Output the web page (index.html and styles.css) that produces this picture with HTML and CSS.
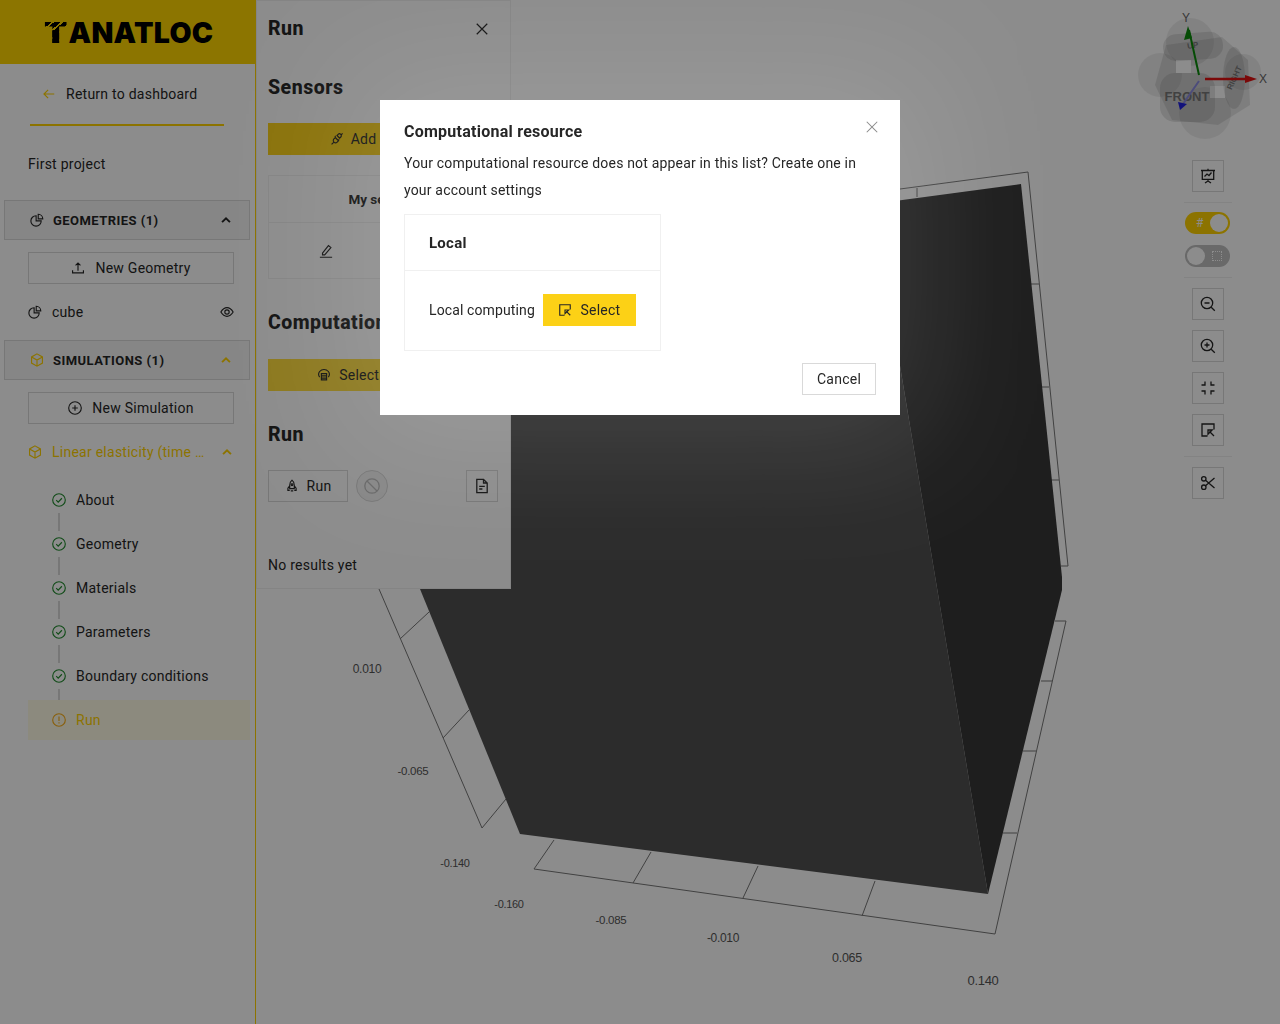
FILE: index.html
```html
<!DOCTYPE html>
<html lang="en">
<head>
    <meta charset="UTF-8">
    <meta name="viewport" content="width=device-width, initial-scale=1.0">
    <title>Tanatloc</title>
    <link rel="stylesheet" href="styles.css">
</head>
<body>
    <svg class="icon-defs" aria-hidden="true">
        <symbol id="i-back" viewBox="0 0 16 16"><path d="M14 8H2.500M7 3.200 2.200 8 7 12.800"/></symbol>
        <symbol id="i-pie" viewBox="0 0 16 16"><path d="M7 3.200A5.900 5.900 0 1 0 12.800 9H7zM9.400 1.400a5.400 5.400 0 0 1 5.200 5.300H9.400z"/></symbol>
        <symbol id="i-up" viewBox="0 0 16 16"><path d="M3.500 10.500 8 6l4.500 4.500"/></symbol>
        <symbol id="i-upload" viewBox="0 0 16 16"><path d="M8 11V2.500M5.200 5 8 2.300 10.800 5M1.800 10.500v3h12.400v-3"/></symbol>
        <symbol id="i-eye" viewBox="0 0 16 16"><path d="M1 8c2-3.300 4.400-5 7-5s5 1.700 7 5c-2 3.300-4.400 5-7 5s-5-1.700-7-5z"/><circle cx="8" cy="8" r="2.500"/></symbol>
        <symbol id="i-box" viewBox="0 0 16 16"><path d="M8 1l6.200 3.500v7L8 15l-6.200-3.500v-7zM1.800 4.500 8 8l6.200-3.500M8 8v7"/></symbol>
        <symbol id="i-plus-circle" viewBox="0 0 16 16"><circle cx="8" cy="8" r="7.200"/><path d="M8 4.800v6.400M4.800 8h6.400"/></symbol>
        <symbol id="i-check" viewBox="0 0 16 16"><circle cx="8" cy="8" r="7.200"/><path d="M4.800 8.200l2.300 2.300L11.300 6"/></symbol>
        <symbol id="i-warn" viewBox="0 0 16 16"><circle cx="8" cy="8" r="7.200"/><path d="M8 4V9M8 10.600v1.400"/></symbol>
        <symbol id="i-edit" viewBox="0 0 16 16"><path d="M4 10.500 10.800 1.800l2.800 2.200L6.500 12.500H4zM1 15.200h14"/></symbol>
        <symbol id="i-delete" viewBox="0 0 16 16"><path d="M2 4h12M6 4V2h4v2M3.500 4l.7 10h7.600l.7-10"/></symbol>
        <symbol id="i-plug" viewBox="0 0 16 16"><path d="M6 6.300l3.700 3.700-1.500 1.500a2.600 2.600 0 0 1-3.700-3.700zM4.500 11.500 1.800 14.200M10 6l-2-2 1.300-1.300a2.100 2.100 0 0 1 3 3L11 7zM12.300 3.700 14.400 1.600M5.500 5.500l1-1M9.500 9.500l1-1"/></symbol>
        <symbol id="i-cloud" viewBox="0 0 16 16"><path d="M3 10.500a5.500 5.500 0 0 1 0-6.500 6.500 6.500 0 0 1 10 0 5.500 5.500 0 0 1 0 6.500M5 6.500h6v7H5zM5 9h6M5 11.500h6"/></symbol>
        <symbol id="i-rocket" viewBox="0 0 16 16"><path d="M8 1.300c2 1.500 2.600 3.500 2.600 5.700v4H5.400V7c0-2.200.6-4.200 2.600-5.700zM5.400 7.800 3.300 10.500v2.500h2.100M10.600 7.800l2.100 2.700V13h-2.100M6.600 13.500h2.800"/><circle cx="8" cy="6.500" r="1"/></symbol>
        <symbol id="i-stop" viewBox="0 0 16 16"><circle cx="8" cy="8" r="7.200"/><path d="M3 3l10 10"/></symbol>
        <symbol id="i-file" viewBox="0 0 16 16"><path d="M2.800 1.300h6.700l3.700 3.700v9.700H2.800zM9.500 1.300V5h3.700M5.200 8.300h5.600M5.200 11h3.200"/></symbol>
        <symbol id="i-select" viewBox="0 0 16 16"><path d="M14 7.500V2H2v12h5.500M9.500 9.500l4.500 4.500"/><path class="solid" d="M8 8h4.200L8 12.200z"/></symbol>
        <symbol id="i-screen" viewBox="0 0 16 16"><path d="M1 2.500h14M2.300 2.500v8.800h11.400V2.500M4.500 8.500 7 6l2 1.500 2.500-3M8 .8v1.700M8 11.300v1.700M5 15l3-2 3 2"/></symbol>
        <symbol id="i-zoom-out" viewBox="0 0 16 16"><circle cx="7" cy="7" r="5.700"/><path d="M11.200 11.200 14.800 14.800M4.500 7h5"/></symbol>
        <symbol id="i-zoom-in" viewBox="0 0 16 16"><circle cx="7" cy="7" r="5.700"/><path d="M11.200 11.200 14.800 14.800M4.500 7h5M7 4.500v5"/></symbol>
        <symbol id="i-compress" viewBox="0 0 16 16"><path d="M5 1.500V5H1.500M11 1.500V5h3.500M5 14.500V11H1.500M11 14.500V11h3.500"/></symbol>
        <symbol id="i-scissor" viewBox="0 0 16 16"><circle cx="3.800" cy="3.800" r="2.200"/><circle cx="3.800" cy="12.200" r="2.200"/><path d="M5.500 5.200 14.500 13M5.500 10.800 14.500 3"/></symbol>
        <symbol id="i-close" viewBox="0 0 16 16"><path d="M1 1l14 14M15 1 1 15"/></symbol>
    </svg>

    <div class="app">
        <aside class="sidebar">
            <div class="logo"><span class="logo-t">T</span>ANATLOC</div>
            <a class="back"><svg class="ico ico-yellow"><use href="#i-back"/></svg>Return to dashboard</a>
            <div class="project">First project</div>

            <div class="menu-head">
                <svg class="ico"><use href="#i-pie"/></svg>
                <span>GEOMETRIES (1)</span>
                <svg class="ico chevron"><use href="#i-up"/></svg>
            </div>
            <button class="btn side-btn"><svg class="ico"><use href="#i-upload"/></svg>New Geometry</button>
            <div class="geometry-row">
                <svg class="ico"><use href="#i-pie"/></svg>
                <span>cube</span>
                <svg class="ico eye"><use href="#i-eye"/></svg>
            </div>

            <div class="menu-head">
                <svg class="ico ico-yellow"><use href="#i-box"/></svg>
                <span>SIMULATIONS (1)</span>
                <svg class="ico chevron ico-yellow"><use href="#i-up"/></svg>
            </div>
            <button class="btn side-btn"><svg class="ico"><use href="#i-plus-circle"/></svg>New Simulation</button>
            <div class="sim-row">
                <svg class="ico"><use href="#i-box"/></svg>
                <span class="sim-name">Linear elasticity (time dependent)</span>
                <svg class="ico chevron"><use href="#i-up"/></svg>
            </div>

            <ul class="steps">
                <li class="step"><svg class="ico ico-green"><use href="#i-check"/></svg>About</li>
                <li class="step"><svg class="ico ico-green"><use href="#i-check"/></svg>Geometry</li>
                <li class="step"><svg class="ico ico-green"><use href="#i-check"/></svg>Materials</li>
                <li class="step"><svg class="ico ico-green"><use href="#i-check"/></svg>Parameters</li>
                <li class="step"><svg class="ico ico-green"><use href="#i-check"/></svg>Boundary conditions</li>
                <li class="step step-active"><svg class="ico ico-orange"><use href="#i-warn"/></svg>Run</li>
            </ul>
        </aside>

        <main class="workspace">
            <svg class="scene" viewBox="256 0 1024 1024">
                <g class="grid">
                    <path d="M900 189 1028 172 1068 566H1061M917 188V197M1039 284H1031M1049 387H1042M1059 480H1051"/>
                    <path d="M554 840 534 869 995 934 1066 621H1055M651 852 633 883M758 866 743 898M875 881 862 916M1003 833H1017M1023 751H1036M1041 681H1052"/>
                    <path d="M379 589 482 828 506 799M400 639 429 612M443 738 469 710"/>
                </g>
                <polygon class="face-light" points="349,415 520,834 988,894 939,600 900,366 880,250 349,250"/>
                <polygon class="face-dark" points="1021,184 880,203 900,366 939,600 988,894 1062,590 1062,577"/>
                <g class="ticks">
                    <text x="367" y="673" font-size="12">0.010</text>
                    <text x="413" y="775" font-size="11.500">-0.065</text>
                    <text x="455" y="867" font-size="11">-0.140</text>
                    <text x="509" y="908" font-size="11">-0.160</text>
                    <text x="611" y="924" font-size="11.500">-0.085</text>
                    <text x="723" y="942" font-size="12">-0.010</text>
                    <text x="847" y="962" font-size="12.500">0.065</text>
                    <text x="983" y="985" font-size="13">0.140</text>
                </g>
                <g class="cube">
                    <circle cx="1190" cy="42" r="24"/>
                    <circle cx="1160" cy="75" r="22"/>
                    <circle cx="1205" cy="113" r="26"/>
                    <circle cx="1243" cy="72" r="18"/>
                    <path d="M1166 45 1222 37 1248 60 1250 105 1218 125 1172 120 1155 85z"/>
                    <rect class="gap" x="1176" y="60" width="15" height="13"/>
                    <rect class="gap" x="1210" y="86" width="15" height="12"/>
                    <rect class="side" x="1160" y="73" width="55" height="49" rx="15"/>
                    <rect class="side" x="1163" y="33" width="60" height="27" rx="13" transform="rotate(-4 1193 46)"/>
                    <ellipse class="side" cx="1234" cy="78" rx="11" ry="31"/>
                    <text class="cube-label" x="1187" y="101" font-size="13">FRONT</text>
                    <text class="cube-label" x="1193" y="48" font-size="8" transform="rotate(-10 1193 46)">UP</text>
                    <text class="cube-label" x="1235" y="80" font-size="8" transform="rotate(-65 1235 78)">RIGHT</text>
                    <path class="axis-y" d="M1199 75 1189 30"/>
                    <path class="axis-y-head" d="M1188 26 1184 40 1192 38z"/>
                    <path class="axis-x" d="M1205 79H1246"/>
                    <path class="axis-x-head" d="M1257 79 1245 75V83z"/>
                    <path class="axis-z" d="M1199 81 1183 104"/>
                    <path class="axis-z-head" d="M1180 110 1178 102 1187 104z"/>
                    <text class="axis-label" x="1186" y="22">Y</text>
                    <text class="axis-label" x="1263" y="83">X</text>
                </g>
            </svg>

            <section class="panel">
                <div class="panel-head">
                    <h2>Run</h2>
                    <svg class="ico close"><use href="#i-close"/></svg>
                </div>
                <h3>Sensors</h3>
                <button class="btn btn-primary wide add-btn"><svg class="ico"><use href="#i-plug"/></svg>Add sensors</button>
                <div class="sensors">
                    <div class="sensors-title">My sensors</div>
                    <div class="sensors-actions">
                        <svg class="ico"><use href="#i-edit"/></svg>
                        <svg class="ico"><use href="#i-delete"/></svg>
                    </div>
                </div>
                <h3 class="section">Computational resource</h3>
                <button class="btn btn-primary btn-soft wide select-btn"><svg class="ico"><use href="#i-cloud"/></svg>Select computing</button>
                <h3 class="section">Run</h3>
                <div class="run-row">
                    <button class="btn run-btn"><svg class="ico"><use href="#i-rocket"/></svg>Run</button>
                    <button class="round-btn"><svg class="ico"><use href="#i-stop"/></svg></button>
                    <button class="btn square-btn log-btn"><svg class="ico"><use href="#i-file"/></svg></button>
                </div>
                <p class="no-results">No results yet</p>
            </section>

            <div class="toolbar">
                <button class="btn square-btn"><svg class="ico"><use href="#i-screen"/></svg></button>
                <div class="divider divider-tight"></div>
                <div class="switch switch-on"><span class="switch-glyph">#</span><span class="knob"></span></div>
                <div class="switch"><span class="knob"></span><span class="dots"></span></div>
                <div class="divider"></div>
                <button class="btn square-btn"><svg class="ico"><use href="#i-zoom-out"/></svg></button>
                <button class="btn square-btn"><svg class="ico"><use href="#i-zoom-in"/></svg></button>
                <button class="btn square-btn"><svg class="ico"><use href="#i-compress"/></svg></button>
                <button class="btn square-btn"><svg class="ico"><use href="#i-select"/></svg></button>
                <div class="divider"></div>
                <button class="btn square-btn"><svg class="ico"><use href="#i-scissor"/></svg></button>
            </div>
        </main>
    </div>

    <div class="mask">
        <div class="modal">
            <svg class="ico modal-close"><use href="#i-close"/></svg>
            <div class="modal-title">Computational resource</div>
            <p class="modal-text">Your computational resource does not appear in this list? Create one in your account settings</p>
            <div class="card">
                <div class="card-head">Local</div>
                <div class="card-body">
                    <span class="card-name">Local computing</span>
                    <button class="btn btn-primary"><svg class="ico"><use href="#i-select"/></svg>Select</button>
                </div>
            </div>
            <div class="modal-foot">
                <button class="btn cancel-btn">Cancel</button>
            </div>
        </div>
    </div>
</body>
</html>
```

FILE: styles.css
```css
* {
    box-sizing: border-box;
}

html, body {
    margin: 0;
    height: 100%;
    overflow: hidden;
}

body {
    font-family: Roboto, "Noto Sans", sans-serif;
    font-size: 14px;
    letter-spacing: 0.25px;
    color: #262626;
    background: #fff;
}

h2, h3, p, ul {
    margin: 0;
    padding: 0;
}

.icon-defs {
    display: none;
}

.ico {
    width: 14px;
    height: 14px;
    flex: none;
    fill: none;
    stroke: currentColor;
    stroke-width: 1.3;
}

.ico .solid {
    fill: currentColor;
    stroke: none;
}

.ico-yellow { color: #ffd200; }
.ico-green { color: #1f8a2c; }
.ico-orange { color: #faad14; }

.btn {
    display: inline-flex;
    align-items: center;
    justify-content: center;
    gap: 8px;
    height: 32px;
    padding: 0 16px;
    border: 1px solid #d9d9d9;
    background: #fff;
    color: #262626;
    font: inherit;
    letter-spacing: inherit;
}

.btn-primary {
    background: #fcd116;
    border-color: #fcd116;
}

.btn-soft {
    background: #ffdc3a;
    border-color: #ffdc3a;
}

.square-btn {
    width: 32px;
    padding: 0;
}

.square-btn .ico {
    width: 16px;
    height: 16px;
}

.app {
    display: flex;
    height: 100vh;
}

/* left menu */
.sidebar {
    width: 256px;
    flex: none;
    border-right: 1px solid #ffd200;
}

.logo {
    height: 64px;
    margin-right: -1px;
    padding: 1px 0 0 3px;
    display: flex;
    align-items: center;
    justify-content: center;
    background: #ffd500;
    color: #000;
    font-family: Inter, sans-serif;
    font-weight: 900;
    font-size: 28.500px;
    letter-spacing: 0.3px;
}

.logo-t {
    display: inline-block;
    margin: 0 3px 0 0;
    transform: scaleX(1.2);
    background:
        linear-gradient(#000, #000) 0 100% / 100% 58% no-repeat,
        repeating-linear-gradient(135deg, #000 0 4px, #ffd500 4px 5.500px);
    -webkit-background-clip: text;
    background-clip: text;
    color: transparent;
}

.back {
    display: flex;
    align-items: center;
    gap: 10px;
    height: 62px;
    margin: 0 31px 0 30px;
    padding-left: 12px;
    border-bottom: 2px solid #ffd200;
}

.project {
    height: 74px;
    padding: 2px 0 0 28px;
    display: flex;
    align-items: center;
}

.menu-head {
    display: flex;
    align-items: center;
    gap: 9px;
    height: 40px;
    margin: 0 5px 0 4px;
    padding: 0 16px 0 25px;
    border: 1px solid #d9d9d9;
    background: #f5f5f5;
    font-weight: 700;
    font-size: 13px;
    letter-spacing: 0.45px;
}

.chevron {
    margin-left: auto;
    stroke-width: 2.2;
}

.side-btn {
    display: flex;
    width: 206px;
    margin: 12px 0 12px 28px;
    gap: 10px;
}

.geometry-row {
    display: flex;
    align-items: center;
    gap: 10px;
    height: 32px;
    margin-bottom: 12px;
    padding: 0 21px 0 28px;
}

.eye {
    margin-left: auto;
}

.sim-row {
    display: flex;
    align-items: center;
    gap: 10px;
    height: 32px;
    padding: 0 21px 0 28px;
    color: #ffd200;
}

.sim-name {
    flex: 1;
    min-width: 0;
    white-space: nowrap;
    overflow: hidden;
    text-overflow: ellipsis;
}

.sim-row .chevron {
    margin-left: 0;
}

.steps {
    list-style: none;
    margin: 12px 5px 0 28px;
    display: flex;
    flex-direction: column;
    gap: 4px;
}

.step {
    position: relative;
    display: flex;
    align-items: center;
    gap: 10px;
    height: 40px;
    padding-left: 24px;
}

.step::after {
    content: "";
    position: absolute;
    left: 30px;
    top: 33px;
    width: 2px;
    height: 18px;
    background: #d9d9d9;
}

.step-active {
    background: #fffbe6;
    color: #ffd200;
}

.step-active::after {
    display: none;
}

/* canvas and run panel */
.workspace {
    position: relative;
    flex: 1;
    min-width: 0;
    background: #fff;
}

.scene {
    position: absolute;
    inset: 0;
    width: 100%;
    height: 100%;
}

.grid path {
    fill: none;
    stroke: #777;
    stroke-width: 1;
}

.face-light { fill: #505050; }
.face-dark { fill: #373737; }

.ticks text {
    font-family: "Liberation Sans", sans-serif;
    letter-spacing: -0.3px;
    text-anchor: middle;
    fill: #555;
}

.cube circle {
    fill: #000;
    fill-opacity: 0.07;
}

.cube > path:first-of-type {
    fill: #000;
    fill-opacity: 0.1;
}

.cube .gap { fill: #fff; }
.cube .side { fill: #666; fill-opacity: 0.18; }

.cube-label {
    font-family: "Liberation Sans", sans-serif;
    font-weight: 700;
    letter-spacing: 0;
    text-anchor: middle;
    fill: #777;
}

.axis-label {
    font-family: "Liberation Sans", sans-serif;
    font-size: 12px;
    letter-spacing: 0;
    text-anchor: middle;
    fill: #666;
}

.axis-y { stroke: #0a8a0a; stroke-width: 2; }
.axis-y-head { fill: #0a8a0a; }
.axis-x { stroke: #e01010; stroke-width: 2.500; }
.axis-x-head { fill: #e01010; }
.axis-z { stroke: #8a8ae0; stroke-width: 2; }
.axis-z-head { fill: #2020e0; }

.panel {
    position: relative;
    width: 255px;
    height: 589px;
    padding: 0 11px;
    background: #fff;
    border: 1px solid #f0f0f0;
}

.panel-head {
    display: flex;
    align-items: center;
    justify-content: space-between;
    height: 56px;
    padding-right: 11px;
}

.panel-head .close {
    width: 12px;
    height: 12px;
    stroke-width: 1.6;
}

.panel h2, .panel h3 {
    font-size: 19.500px;
    line-height: 24px;
    font-weight: 800;
    letter-spacing: 0.5px;
}

.panel h3 {
    margin-top: 19px;
}

.panel h3.section {
    margin-top: 32px;
    white-space: nowrap;
}

.wide {
    display: flex;
    width: 231px;
    margin-top: 23px;
}

.add-btn {
    gap: 7px;
    padding: 0 22px 0 16px;
}

.select-btn {
    margin-top: 24px;
    padding: 0 0 0 2px;
}

.sensors {
    width: 231px;
    height: 104px;
    margin-top: 20px;
    border: 1px solid #f0f0f0;
}

.sensors-title {
    height: 47px;
    display: flex;
    align-items: center;
    justify-content: center;
    font-size: 13.500px;
    font-weight: 700;
    letter-spacing: 0;
    border-bottom: 1px solid #f0f0f0;
}

.sensors-actions {
    height: 55px;
    display: flex;
    align-items: center;
    justify-content: space-around;
}

.run-row {
    display: flex;
    align-items: center;
    margin-top: 23px;
    padding-right: 1px;
}

.run-btn {
    width: 80px;
    padding: 0;
}

.round-btn {
    display: flex;
    align-items: center;
    justify-content: center;
    width: 32px;
    height: 32px;
    margin-left: 8px;
    padding: 0;
    border: 1px solid #d9d9d9;
    border-radius: 50%;
    background: #f5f5f5;
    color: #bfbfbf;
}

.round-btn .ico {
    width: 16px;
    height: 16px;
}

.log-btn {
    margin-left: auto;
}

.no-results {
    margin-top: 53px;
    line-height: 20px;
}

/* right toolbar */
.toolbar {
    position: absolute;
    top: 160px;
    right: 48px;
    width: 48px;
    display: flex;
    flex-direction: column;
    align-items: center;
    gap: 10px;
}

.toolbar .btn {
    background: transparent;
}

.divider {
    width: 100%;
    height: 1px;
    background: #eee;
}

.divider-tight {
    margin-bottom: -1px;
}

.toolbar .switch + .switch {
    margin-top: 1px;
}

.switch {
    display: flex;
    align-items: center;
    justify-content: space-between;
    align-self: flex-start;
    width: 45px;
    height: 22px;
    margin-left: 1px;
    padding: 0 2px;
    border-radius: 11px;
    background: #bfbfbf;
}

.switch-on {
    background: #ffd200;
}

.knob {
    width: 18px;
    height: 18px;
    border-radius: 50%;
    background: #fff;
}

.switch-glyph {
    margin-left: 9px;
    color: #fff;
    font-size: 12px;
    line-height: 1;
}

.dots {
    width: 10px;
    height: 10px;
    margin-right: 6px;
    border: 1px dotted #fff;
}

/* modal */
.mask {
    position: fixed;
    inset: 0;
    background: rgba(0, 0, 0, 0.45);
}

.modal {
    position: relative;
    width: 520px;
    height: 315px;
    margin: 100px auto 0;
    padding: 21px 24px 20px;
    background: #fff;
    box-shadow: 0 0 130px 30px rgba(255, 255, 255, 0.12);
}

.modal-close {
    position: absolute;
    top: 21px;
    right: 22px;
    width: 12px;
    height: 12px;
    stroke-width: 1.4;
    color: #8c8c8c;
}

.modal-title {
    font-size: 16px;
    line-height: 22px;
    font-weight: 700;
}

.modal-text {
    margin-top: 7px;
    line-height: 27px;
    letter-spacing: 0.18px;
}

.card {
    width: 257px;
    height: 137px;
    margin-top: 10px;
    border: 1px solid #f0f0f0;
}

.card-head {
    display: flex;
    align-items: center;
    height: 56px;
    padding-left: 24px;
    border-bottom: 1px solid #f0f0f0;
    font-size: 15px;
    font-weight: 700;
}

.card-body {
    display: flex;
    align-items: center;
    gap: 8px;
    height: 79px;
    padding: 0 24px 1px;
    white-space: nowrap;
}

.card-name {
    letter-spacing: 0.12px;
}

.card-body .btn {
    width: 93px;
    padding: 0;
}

.modal-foot {
    display: flex;
    justify-content: flex-end;
    margin-top: 12px;
}

.cancel-btn {
    width: 74px;
    padding: 0;
}
```
